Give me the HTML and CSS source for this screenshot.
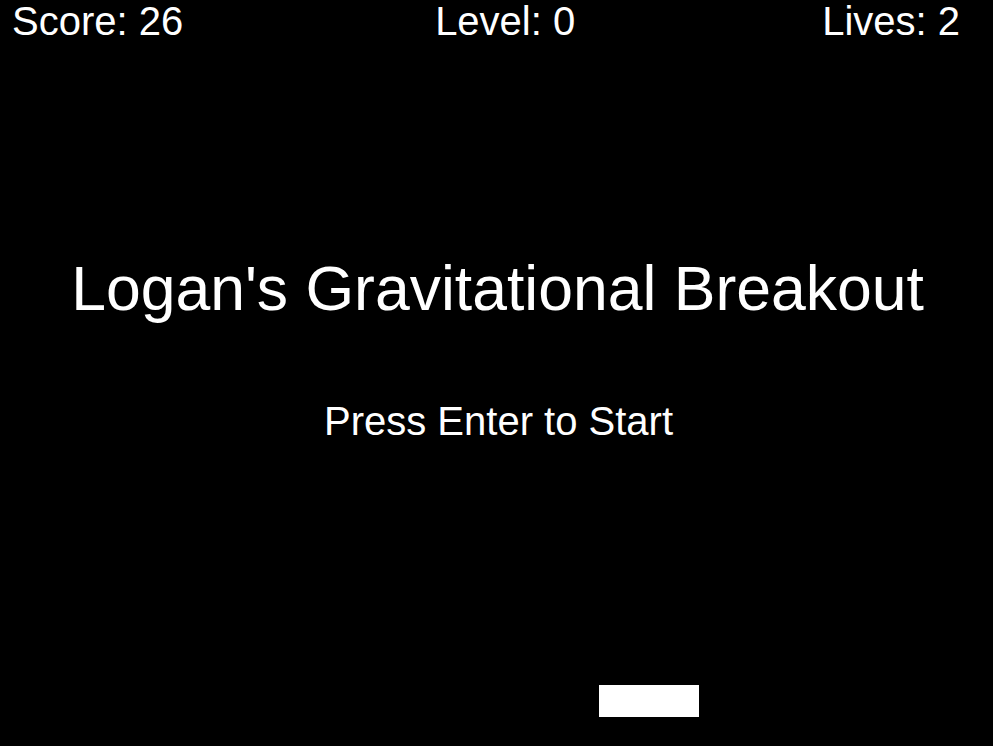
FILE: index.html
```html
<!DOCTYPE html>
<html lang="en">
<head>
<meta charset="utf-8">
<title>Logan's Gravitational Breakout</title>
<link rel="stylesheet" href="styles.css">
</head>
<body>
<main class="game">
  <header class="hud">
    <span class="hud-item">Score: 26</span>
    <span class="hud-item hud-level">Level: 0</span>
    <span class="hud-item">Lives: 2</span>
  </header>
  <h1 class="title">Logan's Gravitational Breakout</h1>
  <p class="prompt">Press Enter to Start</p>
  <div class="paddle"></div>
</main>
</body>
</html>
```
FILE: styles.css
```css
html, body {
  margin: 0;
  padding: 0;
  background: #000;
}
.game {
  width: 993px;
  height: 746px;
  overflow: hidden;
  background: #000;
  color: #fff;
  font-family: "Liberation Sans", Arial, sans-serif;
  display: flex;
  flex-direction: column;
}
.hud {
  display: flex;
  justify-content: space-between;
  padding: 0 33px 0 12px;
  font-size: 40px;
  line-height: 42px;
  height: 42px;
}
.hud-level {
  margin-left: 5px;
}
.title {
  margin: 215px 0 0;
  font-size: 62.5px;
  font-weight: normal;
  line-height: 63px;
  text-align: center;
  padding-left: 2px;
}
.prompt {
  margin: 81px 0 0;
  padding-left: 4px;
  font-size: 40px;
  line-height: 40px;
  text-align: center;
}
.paddle {
  margin: 244px 0 0 599px;
  width: 100px;
  height: 32px;
  background: #fff;
}
```
